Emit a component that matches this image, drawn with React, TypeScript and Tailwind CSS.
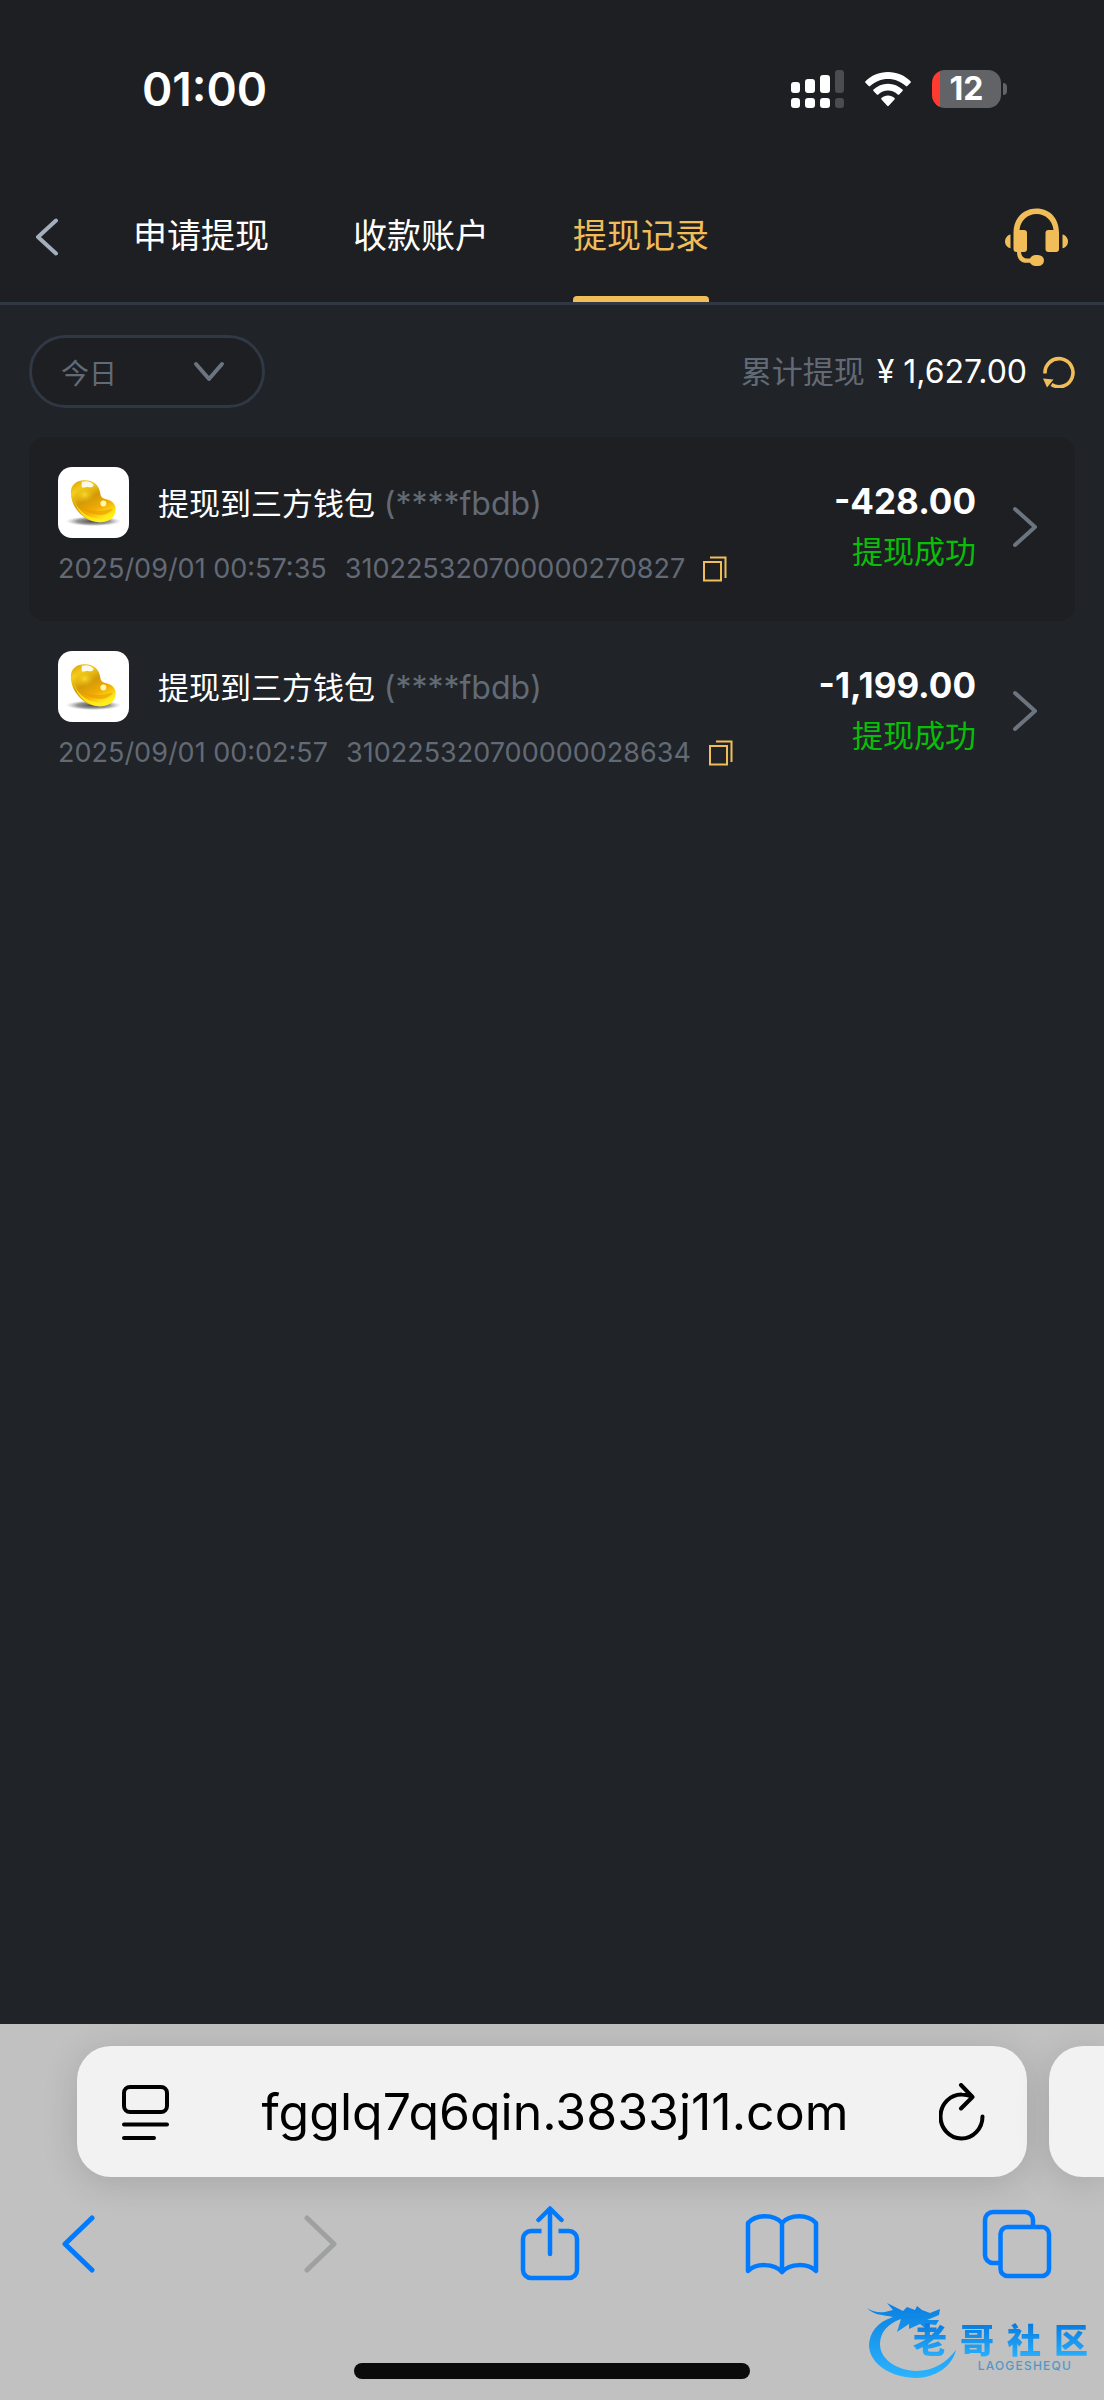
import { useState } from "react";

const FONT = "font-[Inter,'Noto_Sans_CJK_SC',sans-serif]";

const tabs = ["申请提现", "收款账户", "提现记录"];

const records = [
    { id: "310225320700000270827", time: "2025/09/01 00:57:35", amount: "-428.00" },
    { id: "310225320700000028634", time: "2025/09/01 00:02:57", amount: "-1,199.00" },
];

function StatusBar() {
    return (
        <div className="flex items-center justify-between pl-[142px] pr-[97px] pt-[62px]">
            <span className="text-[46px] leading-[54px] font-semibold">01:00</span>
            <div className="flex items-center gap-[21px]">
                <svg width="53" height="38" viewBox="0 0 53 38" fill="#fff">
                    <rect x="0" y="12" width="9" height="11" rx="3" />
                    <rect x="14" y="9" width="10" height="14" rx="3" />
                    <rect x="29" y="5" width="10" height="18" rx="3" />
                    <rect x="44" y="0" width="9" height="23" rx="3" fill="#4b4c50" />
                    <rect x="0" y="28" width="9" height="10" rx="3" />
                    <rect x="14" y="28" width="10" height="10" rx="3" />
                    <rect x="29" y="28" width="10" height="10" rx="3" />
                    <rect x="44" y="28" width="9" height="10" rx="3" fill="#4b4c50" />
                </svg>
                <svg width="46" height="35" viewBox="0 0 46 35" fill="#fff">
                    <path d="M23 0C14 0 6 3.600 0.500 9.300a1 1 0 0 0 0 1.500l3.200 3.300a1 1 0 0 0 1.500 0C9.800 9.700 16 7 23 7s13.200 2.700 17.800 7.100a1 1 0 0 0 1.500 0l3.200-3.300a1 1 0 0 0 0-1.500C40 3.600 32 0 23 0Z" />
                    <path d="M23 11.800c-5.600 0-10.700 2.200-14.500 5.800a1 1 0 0 0 0 1.500l3.300 3.300a1 1 0 0 0 1.500 0C15.900 20 19.300 18.600 23 18.600s7.100 1.400 9.700 3.800a1 1 0 0 0 1.500 0l3.300-3.300a1 1 0 0 0 0-1.500C33.700 14 28.600 11.800 23 11.800Z" />
                    <path d="M23 23.500c-2.500 0-4.800 0.900-6.500 2.400a1 1 0 0 0 0 1.500l5.700 6.300a1 1 0 0 0 1.500 0l5.800-6.300a1 1 0 0 0 0-1.500C27.800 24.400 25.500 23.500 23 23.500Z" />
                </svg>
                <div className="flex items-center gap-0.5">
                    <div className="flex h-[38px] w-[69px] items-center justify-center rounded-[13px] bg-[linear-gradient(to_right,#ff3b30_8px,#626367_8px)] text-[32px] font-bold">
                        12
                    </div>
                    <div className="h-3 w-1 rounded-r-full bg-[#626367]" />
                </div>
            </div>
        </div>
    );
}

function HeadsetIcon() {
    return (
        <svg width="64" height="58" viewBox="0 0 64 58" fill="#f0bd59">
            <path d="M8.500 24.500C8.500 10 18.500 0.500 31.500 0.500S54 10 54 24.500V41a3 3 0 0 1-3 3h-7.500a3 3 0 0 1-3-3V25a3 3 0 0 1 3-3H48.500C47.500 12.500 40.500 6 31.500 6S15.500 12.500 14.500 22H19a3 3 0 0 1 3 3v16a3 3 0 0 1-3 3h-3c0.300 4 2.500 6.500 6 6.500h3c1.200-2 3-3.500 5.500-3.500h2.500a6 5.500 0 0 1 0 11h-2.500c-2.500 0-4.500-1.200-5.500-3.200h-3.500C15.500 54.800 12 50.500 12 44h-0.500a3 3 0 0 1-3-3Z" />
            <path d="M5.500 26.500C2.500 27 0 30 0 33.500s2.500 6.300 5.500 6.800Z" />
            <path d="M57.500 26.500c3 0.500 5.500 3.500 5.500 7s-2.500 6.300-5.500 6.800Z" />
        </svg>
    );
}

function RefreshIcon() {
    return (
        <svg width="32" height="32" viewBox="0 0 32 32" fill="none">
            <path d="M2 17.500A14 14 0 1 1 8.500 28.500" stroke="#f0bd59" strokeWidth="3.600" />
            <path d="M0 22.500L10.500 23.500L4 31.500Z" fill="#f0bd59" />
        </svg>
    );
}

function BeanIcon() {
    return (
        <svg width="71" height="71" viewBox="0 0 72 72" className="rounded-[14px] bg-white">
            <defs>
                <linearGradient id="bean" x1="0" y1="0" x2="0.6" y2="1">
                    <stop offset="0" stopColor="#d79a06" />
                    <stop offset="0.25" stopColor="#f5cf1b" />
                    <stop offset="0.5" stopColor="#d29a08" />
                    <stop offset="0.75" stopColor="#f3ac05" />
                    <stop offset="1" stopColor="#ffee1c" />
                </linearGradient>
                <radialGradient id="beanGlow">
                    <stop offset="0" stopColor="#f7d92a" />
                    <stop offset="1" stopColor="#e0a80a" stopOpacity="0" />
                </radialGradient>
                <radialGradient id="beanShadow">
                    <stop offset="0" stopColor="#333" stopOpacity="0.9" />
                    <stop offset="0.6" stopColor="#555" stopOpacity="0.6" />
                    <stop offset="1" stopColor="#999" stopOpacity="0" />
                </radialGradient>
            </defs>
            <ellipse cx="36" cy="55" rx="28" ry="5" fill="url(#beanShadow)" />
            <path d="M13 26C13 18 19 13.500 27 13.500C36 13.500 41 18 42.500 25C43.500 31 44.500 31.500 50 33C55.500 34.500 58.500 38 58.500 43C58.500 51.500 51 56 42 56C25 55.500 13 40 13 26Z" fill="url(#bean)" />
            <path d="M16 32C19 43 28 51 41 52.500C49 53 54 50 57 45C56 52 50 56 42 56C29 55.500 18 44 16 32Z" fill="#ffef18" opacity="0.8" />
            <path d="M18 34C26 45 38 47 56 42C51 49 42 50 34 47C26 44 21 40 18 34Z" fill="#eb9a00" opacity="0.6" />
            <ellipse cx="27" cy="28" rx="11" ry="9" fill="url(#beanGlow)" />
            <path d="M24 15C29 13.500 34 15 36 18C36 21 32 21 30 20C28 20 25 22 24 20Z" fill="#fff" opacity="0.9" />
            <circle cx="46" cy="37" r="3" fill="#fff8b0" />
        </svg>
    );
}

function CopyIcon() {
    return (
        <svg width="24" height="26" viewBox="0 0 24 26" fill="none" stroke="#f0bd59" strokeWidth="2">
            <path d="M1 6h17v18.500H1Z" />
            <path d="M7 1.500h15.500V22" />
        </svg>
    );
}

function Record({ record, filled }: { record: (typeof records)[number]; filled: boolean }) {
    return (
        <li className={`flex items-center rounded-2xl px-[29px] pt-[30px] pb-[34px] ${filled ? "bg-[#1e1f23]" : ""}`}>
            <div className="flex-1">
                <div className="flex items-end">
                    <BeanIcon />
                    <p className="ml-[29px] text-[31px] leading-[68px]">
                        提现到三方钱包 <span className="text-[32px] text-[#626a75]">(****fbdb)</span>
                    </p>
                </div>
                <div className="mt-[13px] flex items-center text-[27px] leading-9 text-[#626a75]">
                    <time>{record.time}</time>
                    <span className="ml-[18px]">{record.id}</span>
                    <button type="button" aria-label="复制" className="ml-[18px]">
                        <CopyIcon />
                    </button>
                </div>
            </div>
            <div className="text-right">
                <p className="text-[35px] leading-[50px] font-bold">{record.amount}</p>
                <p className="text-[31px] leading-[52px] text-[#08be08]">提现成功</p>
            </div>
            <button type="button" aria-label="详情" className="ml-9 mr-2">
                <svg width="26" height="42" viewBox="0 0 26 42" fill="none" stroke="#6c7480" strokeWidth="4" strokeLinecap="round" strokeLinejoin="round">
                    <path d="M3 3L23 21L3 39" />
                </svg>
            </button>
        </li>
    );
}

function Watermark() {
    return (
        <div className="absolute right-4 bottom-5 flex items-end">
            <svg width="96" height="78" viewBox="0 0 96 78" fill="url(#dragon)" className="-mr-[50px]">
                <defs>
                    <linearGradient id="dragon" x1="0" y1="0" x2="0" y2="1">
                        <stop offset="0" stopColor="#0a7fe0" />
                        <stop offset="1" stopColor="#2bb4ff" />
                    </linearGradient>
                </defs>
                <path d="M26 15C10 20 2 31 2 44C3 62 24 76 50 76C70 75 85 64 89 48C80 60 67 69 49 69C29 68 13 57 13 42C13 31 20 22 34 17L30 30L42 22L42 27L53 22L58 26L60 22L69 23L72 18H60L72 13L73 7L63 11L55 8L50 4L48 8L40 5L36 9L20 1L26 8L18 10C12 11 6 10 0 6C6 13 16 13 26 15Z" />
            </svg>
            <div className="flex flex-col items-end pb-2">
                <div className="flex gap-[13px] text-[34px] leading-[38px] font-black">
                    {["老", "哥", "社", "区"].map((char) => (
                        <span key={char} className="bg-linear-to-b from-[#0878dd] to-[#2bb4ff] bg-clip-text text-transparent">{char}</span>
                    ))}
                </div>
                <span className="mr-4 text-[12px] leading-3 font-medium tracking-widest text-[#5198c8]">LAOGESHEQU</span>
            </div>
        </div>
    );
}

function BrowserBar() {
    return (
        <footer className="relative mt-auto overflow-hidden bg-[#c1c1c1] pt-[22px]">
            <div className="flex gap-[22px] pl-[77px]">
                <div className="flex h-[131px] min-w-0 flex-1 items-center justify-between rounded-[34px] bg-[#f2f2f2] px-[42px] shadow-[0_6px_36px_rgba(0,0,0,0.14)]">
                    <button type="button" aria-label="页面菜单">
                        <svg width="52" height="58" viewBox="0 0 52 58" fill="none" stroke="#000" strokeWidth="4" strokeLinecap="round">
                            <rect x="5" y="4" width="43" height="25" rx="6" />
                            <path d="M5 41.500H48M5 55H35" />
                        </svg>
                    </button>
                    <input aria-label="地址" defaultValue="fgglq7q6qin.3833j11.com" className="min-w-0 flex-1 bg-transparent text-center text-[50px] leading-[60px] text-black outline-none" />
                    <button type="button" aria-label="重新加载">
                        <svg width="46" height="58" viewBox="0 0 46 58" fill="none" stroke="#000" strokeWidth="4" strokeLinecap="round" strokeLinejoin="round">
                            <path d="M32 13.200C29 12 26 11.500 23 11.500A21 22 0 1 0 43.500 33.500" />
                            <path d="M22 2L33.500 14L22 25.500" />
                        </svg>
                    </button>
                </div>
                <div className="h-[131px] w-[55px] shrink-0 rounded-l-[34px] bg-[#f2f2f2] shadow-[0_6px_36px_rgba(0,0,0,0.14)]" />
            </div>
            <nav className="mt-[27px] flex items-center justify-between pr-[39px] pl-[30px] text-[#007aff]">
                <button type="button" aria-label="后退" className="flex h-20 w-24 items-center justify-center">
                    <svg width="34" height="58" viewBox="0 0 34 58" fill="none" stroke="currentColor" strokeWidth="5" strokeLinecap="round" strokeLinejoin="round">
                        <path d="M31 3L4 29L31 55" />
                    </svg>
                </button>
                <button type="button" aria-label="前进" className="flex h-20 w-24 items-center justify-center pl-4 text-[#9fa0a0]">
                    <svg width="34" height="58" viewBox="0 0 34 58" fill="none" stroke="currentColor" strokeWidth="5" strokeLinecap="round" strokeLinejoin="round">
                        <path d="M3 3L30 29L3 55" />
                    </svg>
                </button>
                <button type="button" aria-label="分享" className="flex h-20 w-24 items-center justify-center pl-1">
                    <svg width="60" height="76" viewBox="0 0 60 76" fill="none" stroke="currentColor" strokeWidth="4.500" strokeLinejoin="round">
                        <path d="M21.500 25H11a8 8 0 0 0-8 8v31a8 8 0 0 0 8 8h38a8 8 0 0 0 8-8V33a8 8 0 0 0-8-8H38.500" />
                        <path d="M30 48V3M18.500 14L30 2.500L41.500 14" strokeLinecap="round" />
                    </svg>
                </button>
                <button type="button" aria-label="书签" className="flex h-20 w-24 items-center justify-center">
                    <svg width="74" height="64" viewBox="0 0 74 64" fill="none" stroke="currentColor" strokeWidth="4.500" strokeLinejoin="round" strokeLinecap="round">
                        <path d="M37 11C29 2 11 2 3 11V59C11 51 29 51 37 60C45 51 63 51 71 59V11C63 2 45 2 37 11V60" />
                    </svg>
                </button>
                <button type="button" aria-label="标签页" className="flex h-20 w-24 items-center justify-center">
                    <svg width="70" height="70" viewBox="0 0 70 70" fill="none" stroke="currentColor" strokeWidth="4.500">
                        <path d="M18 54H11a8 8 0 0 1-8-8V11a8 8 0 0 1 8-8H43a8 8 0 0 1 8 8V18" />
                        <rect x="18.500" y="18" width="48.500" height="49" rx="7" />
                    </svg>
                </button>
            </nav>
            <div className="mx-auto mt-[79px] mb-[21px] h-4 w-[396px] rounded-full bg-[#0b0b0b]" />
            <Watermark />
        </footer>
    );
}

export default function App() {
    const [active, setActive] = useState(2);

    return (
        <div className={`flex min-h-screen flex-col bg-[#202327] text-white ${FONT}`}>
            <header className="border-b-[3px] border-[#2f3844] bg-[#1e1f23]">
                <StatusBar />
                <nav className="mt-14 flex items-center pr-[35px] pl-[35px]">
                    <button type="button" aria-label="返回">
                        <svg width="24" height="38" viewBox="0 0 24 38" fill="none" stroke="#a4aebd" strokeWidth="4" strokeLinecap="round" strokeLinejoin="round">
                            <path d="M21 2.500L3 19L21 35.500" />
                        </svg>
                    </button>
                    <div className="ml-[74px] flex flex-1 gap-[84px]">
                        {tabs.map((tab, i) => (
                            <button
                                key={tab}
                                type="button"
                                onClick={() => setActive(i)}
                                className={`flex flex-col items-center text-[34px] leading-[50px] ${i === active ? "text-[#f0bd59]" : ""}`}
                            >
                                <span className="pt-[39px] pb-[35px]">{tab}</span>
                                <span className={`h-[6px] w-full rounded-t-[4px] ${i === active ? "bg-[#f0bd59]" : ""}`} />
                            </button>
                        ))}
                    </div>
                    <button type="button" aria-label="客服">
                        <HeadsetIcon />
                    </button>
                </nav>
            </header>

            <main className="px-[29px] pt-[30px]">
                <div className="flex items-center justify-between">
                    <div className="relative">
                        <select aria-label="日期" className="h-[73px] w-[236px] appearance-none rounded-full border-[3px] border-[#2f3844] bg-[#1e1f23] pt-1 pl-[29px] text-[28px] text-[#626a75]">
                            <option>今日</option>
                            <option>昨日</option>
                        </select>
                        <svg width="32" height="21" viewBox="0 0 32 21" fill="none" stroke="#6c7480" strokeWidth="4" strokeLinecap="round" strokeLinejoin="round" className="pointer-events-none absolute top-[26px] right-10">
                            <path d="M3 3L16 18L29 3" />
                        </svg>
                    </div>
                    <div className="flex items-center text-[31px] leading-[48px]">
                        <span className="text-[#626a75]">累计提现</span>
                        <span className="ml-3 text-[32px]">¥ 1,627.00</span>
                        <button type="button" aria-label="刷新" className="ml-4">
                            <RefreshIcon />
                        </button>
                    </div>
                </div>
                <ul className="mt-[29px]">
                    {records.map((record, i) => (
                        <Record key={record.id} record={record} filled={i % 2 === 0} />
                    ))}
                </ul>
            </main>

            <BrowserBar />
        </div>
    );
}
